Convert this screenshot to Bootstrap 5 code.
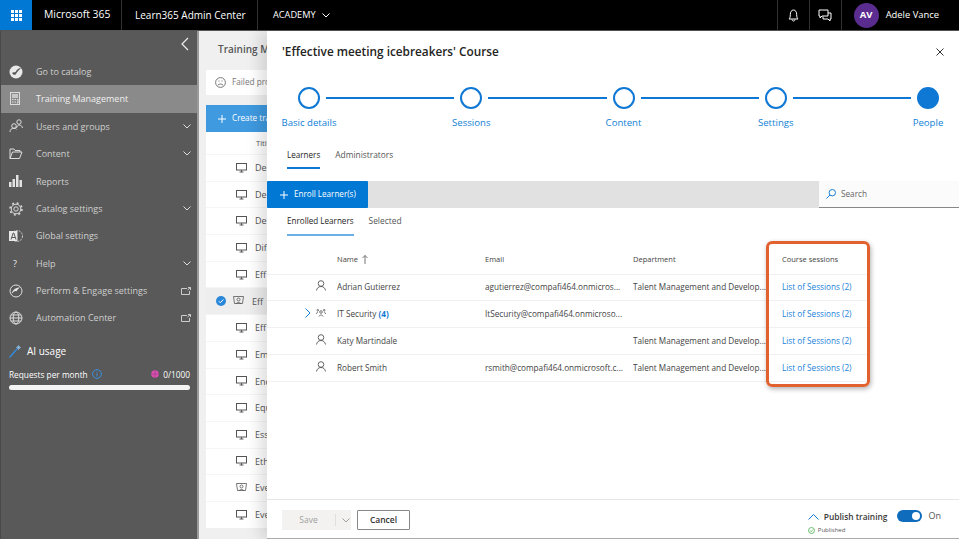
<!DOCTYPE html>
<html lang="en">
<head>
    <meta charset="UTF-8">
    <title>Learn365 Admin Center</title>
    <link href="https://cdn.jsdelivr.net/npm/bootstrap@5.3.0/dist/css/bootstrap.min.css" rel="stylesheet">
    <style>
        html, body { height: 539px; overflow: hidden; }
        body { font-family: "Open Sans", "Noto Sans", sans-serif; font-size: 9px; color: #323130; background: #f0f0f0; }
        svg { display: block; flex-shrink: 0; }

        /* top bar */
        .topbar { height: 31px; background: #000; color: #fff; border-bottom: 1px solid #555; }
        .waffle { width: 32px; background: #0078d4; }
        .top-cell { border-right: 1px solid #333; font-size: 10.4px; white-space: nowrap; }
        .top-brand { width: 90px; padding-left: 12px; }
        .top-app { width: 136px; padding-left: 13px; font-size: 10px; }
        .top-tenant { padding-left: 15px; font-size: 9.2px; gap: 6px; }
        .top-icon { width: 32px; border-left: 1px solid #333; justify-content: center; }
        .avatar { width: 25px; height: 25px; background: #5c2d91; font-size: 9.5px; font-weight: 700; }
        .user-box { border-left: 1px solid #333; padding: 0 20px 0 12px; gap: 7px; font-size: 9.4px; }

        /* sidebar */
        .sidebar { width: 199px; background: #595959; color: #cfcfcf; border-left: 1px solid #4a4a4a; border-right: 2px solid #9a9a9a; }
        .side-collapse { height: 27px; padding: 6px 8px 0 0; }
        .side-item { height: 27.4px; padding-left: 8px; font-size: 9px; }
        .side-item.is-active { background: #8a8a8a; color: #f0f0f0; }
        .side-icon { width: 27px; }
        .side-end { margin-right: 6px; }
        .ai-title { color: #fff; font-size: 10px; margin: 12px 0 0 8px; gap: 5px; line-height: 15px; }
        .ai-row { color: #fff; font-size: 8.3px; padding: 0 7px 0 8px; margin-top: 9px; line-height: 13px; }
        .ai-bar { height: 5px; background: #f4f4f4; border-radius: 3px; margin: 4px 7px 0 8px; }

        /* training list behind the drawer */
        .behind { width: 68px; overflow: hidden; padding-left: 7px; white-space: nowrap; }
        .behind-title { height: 39px; padding: 11px 0 0 12px; font-size: 10px; font-weight: 600; color: #555; }
        .failed-box { height: 25px; background: #fff; width: 100px; padding-left: 9px; gap: 6px; color: #777; font-size: 8.2px; margin-bottom: 10px; }
        .create-btn { height: 27px; width: 100px; background: #3f9ae0; color: #fff; padding-left: 12px; gap: 6px; font-size: 8.2px; }
        .behind-list { background: #fff; width: 100px; }
        .behind-head { height: 22px; padding: 6px 0 0 50px; font-size: 7.6px; color: #555; }
        .behind-row { height: 26.7px; padding-left: 30px; gap: 8px; font-size: 9px; color: #555; border-top: 1px solid #f5f5f5; }
        .behind-row.is-picked { background: #eee; }
        .picked-tick { margin-left: -20px; margin-right: -1px; }

        /* drawer */
        .drawer { background: #fff; z-index: 2; min-width: 0; box-shadow: -7px 0 14px rgba(0,0,0,.13); border-bottom: 1px solid #aaa; }
        .drawer-title { height: 40px; padding: 2px 15px 0; font-size: 11.8px; font-weight: 600; color: #252423; }
        .stepper { height: 63px; padding: 16px 20px 0 31px; }
        .step { width: 22px; color: #0f7fd6; font-size: 9.6px; white-space: nowrap; }
        .step-dot { width: 22px; height: 22px; border: 2px solid #0f78d4; background: #fff; margin-bottom: 7px; flex-shrink: 0; }
        .step-dot.is-current { background: #0f78d4; }
        .step-line { height: 2px; background: #0f78d4; margin: 10px 6px 0; flex: 1 1 0; }
        .step-line.is-long { flex-grow: 1.085; }
        .pane-tabs { padding: 0 20px; gap: 15px; }
        .pane-tabs.is-main .pane-tab { height: 35px; padding-top: 15px; }
        .pane-tabs.is-sub .pane-tab { height: 28px; padding-top: 7px; }
        .pane-tab { font-size: 8.4px; color: #555; border-bottom: 2px solid transparent; white-space: nowrap; }
        .pane-tab.is-on { color: #252423; font-weight: 500; font-size: 8.1px; border-bottom-color: #0f78d4; }
        .pane-tab.is-soft { border-bottom-color: #6cb0e8; }
        .toolbar { height: 27px; background: #e1e1e1; margin-top: 12px; }
        .enroll-btn { width: 101px; background: #0078d4; color: #fff; font-size: 8.1px; gap: 6px; padding: 0 0 0 13px; border: 0; border-radius: 1px; }
        .search-box { width: 140px; background: #fbfbfb; border-bottom: 1px solid #888; padding-left: 7px; gap: 5px; color: #666; font-size: 8.2px; }

        .learner-area { height: 263px; }
        .learner-table { width: 602px; table-layout: fixed; margin: 0; --bs-table-bg: transparent; font-size: 8.2px; color: #444; }
        .learner-table th { height: 38px; font-weight: 400; font-size: 7.5px; color: #444; padding: 10px 0 0; border-bottom: 1px solid #f0f0f0; vertical-align: middle; }
        .learner-table td { height: 26.8px; padding: 0; border-bottom: 1px solid #f0f0f0; vertical-align: middle; white-space: nowrap; overflow: hidden; }
        .col-lead { width: 70px; }
        .col-wide { width: 148px; }
        .lead-cell { gap: 5px; padding: 0 11px 3px 0; }
        .session-link { color: #1a82d8; text-decoration: none; }
        .count-blue { color: #0f78d4; font-weight: 700; }
        .callout { position: absolute; left: 499px; top: 5px; width: 104px; height: 146px; border: 3px solid #e2622f; border-radius: 6px; box-shadow: 1px 2px 5px rgba(0,0,0,.3); pointer-events: none; }

        .drawer-foot { border-top: 1px solid #e6e6e6; padding: 0 18px 0 15px; }
        .save-row { margin-top: 2px; }
        .save-group { width: 69px; height: 20px; background: #f3f2f1; color: #a19f9d; font-size: 8.5px; }
        .save-main { width: 53px; text-align: center; }
        .save-split { border-left: 1px solid #e1dfdd; height: 12px; padding: 0 0 0 6px; }
        .cancel-btn { width: 53px; height: 20px; border: 1px solid #8a8886; background: #fff; color: #323130; font-size: 8.5px; font-weight: 600; padding: 0; border-radius: 1px; margin-left: 6px; }
        .publish-box { padding-top: 8px; margin-right: 10px; }
        .publish-label { font-size: 8.4px; font-weight: 600; color: #3b3a39; gap: 5px; white-space: nowrap; margin-bottom: 2px; }
        .published { font-size: 6px; color: #555; gap: 3px; }
        .toggle-wrap { padding-top: 6px; }
        .toggle-pill { width: 25px; height: 12px; background: #0f6cbd; border-radius: 6px; padding: 2px; }
        .toggle-knob { width: 8px; height: 8px; background: #fff; }
        .toggle-text { font-size: 9px; color: #555; margin-left: 6px; }
    </style>
</head>
<body class="d-flex flex-column">
    <header class="topbar d-flex align-items-stretch flex-shrink-0">
        <div class="waffle d-flex align-items-center justify-content-center">
            <svg width="11" height="11" viewBox="0 0 11 11" fill="#fff"><rect width="3" height="3"/><rect x="4" width="3" height="3"/><rect x="8" width="3" height="3"/><rect y="4" width="3" height="3"/><rect x="4" y="4" width="3" height="3"/><rect x="8" y="4" width="3" height="3"/><rect y="8" width="3" height="3"/><rect x="4" y="8" width="3" height="3"/><rect x="8" y="8" width="3" height="3"/></svg>
        </div>
        <div class="top-cell top-brand d-flex align-items-center">Microsoft 365</div>
        <div class="top-cell top-app d-flex align-items-center">Learn365 Admin Center</div>
        <div class="top-tenant d-flex align-items-center">ACADEMY
            <svg width="8" height="5" viewBox="0 0 8 5" fill="none" stroke="#fff"><path d="M.5.5 4 4 7.5.5"/></svg>
        </div>
        <div class="ms-auto d-flex align-items-stretch">
            <div class="top-icon d-flex align-items-center">
                <svg width="11" height="13" viewBox="0 0 11 13" fill="none" stroke="#fff"><path d="M1 10c1-1 1.300-2 1.300-4.500C2.300 3 3.500 1 5.500 1s3.200 2 3.200 4.500c0 2.500.3 3.500 1.300 4.500zM4 10.500c0 2 3 2 3 0"/></svg>
            </div>
            <div class="top-icon d-flex align-items-center">
                <svg width="14" height="13" viewBox="0 0 14 13" fill="none" stroke="#fff"><path d="M1 1h9v6H4L2 9V7H1zM10 4h3v6h-1v2l-2-2H5V7.500"/></svg>
            </div>
            <div class="user-box d-flex align-items-center">
                <div class="avatar rounded-circle d-flex align-items-center justify-content-center">AV</div>
                <span>Adele Vance</span>
            </div>
        </div>
    </header>

    <div class="d-flex flex-grow-1" style="min-height:0">
        <nav class="sidebar flex-shrink-0 d-flex flex-column">
            <div class="side-collapse d-flex justify-content-end">
                <svg width="8" height="14" viewBox="0 0 8 14" fill="none" stroke="#eee" stroke-width="1.200"><path d="M7 1 1 7l6 6"/></svg>
            </div>
            <div class="side-item d-flex align-items-center">
                <div class="side-icon"><svg width="14" height="14" viewBox="0 0 14 14"><circle cx="7" cy="7" r="6.500" fill="#e8e8e8"/><path d="M3 8c1.500 2 3 2.500 4 1 1-2 3-4 5-6-2.500 0-4.500 2-5.500 4C5.500 7.500 4 7 3 8z" fill="#595959"/></svg></div>
                Go to catalog
            </div>
            <div class="side-item is-active d-flex align-items-center">
                <div class="side-icon"><svg width="13" height="14" viewBox="0 0 13 14" fill="none" stroke="#ddd"><rect x="1.500" y=".5" width="9" height="12"/><path d="M3 3h6M3 5h6" stroke-width="1.500"/><path d="M3 7.500h1.500M5.500 7.500H7M3 10h1.500M5.500 10H7M8 7.500h1V11H8"/></svg></div>
                Training Management
            </div>
            <div class="side-item d-flex align-items-center">
                <div class="side-icon"><svg width="14" height="14" viewBox="0 0 14 14" fill="none" stroke="#ddd"><circle cx="5" cy="7" r="2.300"/><path d="M1 13c0-2.500 1.500-3.700 4-3.700 1 0 2 .3 2.500 1"/><circle cx="10" cy="3" r="2.200"/><path d="M7.500 9c.5-2 1.500-3 2.500-3 2 0 3 1 3.500 3"/></svg></div>
                <span class="flex-grow-1">Users and groups</span>
                <svg class="side-end" width="8" height="5" viewBox="0 0 8 5" fill="none" stroke="#ddd"><path d="M.5.5 4 4 7.500.5"/></svg>
            </div>
            <div class="side-item d-flex align-items-center">
                <div class="side-icon"><svg width="14" height="12" viewBox="0 0 14 12" fill="none" stroke="#ddd"><path d="M1 10.500V1h4l1 1.500h5V4M1 10.500h9.500L13 4H3.500z"/></svg></div>
                <span class="flex-grow-1">Content</span>
                <svg class="side-end" width="8" height="5" viewBox="0 0 8 5" fill="none" stroke="#ddd"><path d="M.5.5 4 4 7.500.5"/></svg>
            </div>
            <div class="side-item d-flex align-items-center">
                <div class="side-icon"><svg width="13" height="12" viewBox="0 0 13 12" fill="#e2e2e2"><rect y="7" width="2.500" height="5"/><rect x="3.500" y="4" width="2.500" height="8"/><rect x="7" y="0" width="2.500" height="12"/><rect x="10.500" y="5" width="2.500" height="7"/></svg></div>
                Reports
            </div>
            <div class="side-item d-flex align-items-center">
                <div class="side-icon"><svg width="14" height="14" viewBox="0 0 14 14" fill="none" stroke="#ddd"><circle cx="7" cy="7" r="2.200"/><circle cx="7" cy="7" r="4.800"/><circle cx="7" cy="7" r="6" stroke-width="1.500" stroke-dasharray="2 2.710"/></svg></div>
                <span class="flex-grow-1">Catalog settings</span>
                <svg class="side-end" width="8" height="5" viewBox="0 0 8 5" fill="none" stroke="#ddd"><path d="M.5.5 4 4 7.500.5"/></svg>
            </div>
            <div class="side-item d-flex align-items-center">
                <div class="side-icon"><svg width="14" height="14" viewBox="0 0 14 14"><circle cx="8" cy="7" r="5.500" fill="none" stroke="#ccc" stroke-dasharray="2 1"/><rect x="0" y="2" width="8.500" height="10" fill="#e8e8e8"/><path d="M2 10.500 4.200 4h.6l2.200 6.500M3 8.500h3" fill="none" stroke="#595959"/></svg></div>
                Global settings
            </div>
            <div class="side-item d-flex align-items-center">
                <div class="side-icon ps-1" style="color:#eee;font-size:9px">?</div>
                <span class="flex-grow-1">Help</span>
                <svg class="side-end" width="8" height="5" viewBox="0 0 8 5" fill="none" stroke="#ddd"><path d="M.5.5 4 4 7.500.5"/></svg>
            </div>
            <div class="side-item d-flex align-items-center">
                <div class="side-icon"><svg width="14" height="14" viewBox="0 0 14 14"><circle cx="7" cy="7" r="6" fill="none" stroke="#ddd"/><path d="M2.500 10C3.500 6 6.500 3.500 11 3.500 9 5 8 6 7.500 7.500 6.500 6.500 4.500 7.500 2.500 10z" fill="#e8e8e8"/></svg></div>
                <span class="flex-grow-1">Perform &amp; Engage settings</span>
                <svg class="side-end" width="10" height="8" viewBox="0 0 10 8" fill="none" stroke="#ccc"><path d="M6 1.500H.5v6h8V4M7 .5h2.500V3M9.500.5 6.500 3"/></svg>
            </div>
            <div class="side-item d-flex align-items-center">
                <div class="side-icon"><svg width="14" height="14" viewBox="0 0 14 14" fill="none" stroke="#ddd"><circle cx="7" cy="7" r="6"/><ellipse cx="7" cy="7" rx="2.800" ry="6"/><path d="M1 7h12M2 4h10M2 10h10"/></svg></div>
                <span class="flex-grow-1">Automation Center</span>
                <svg class="side-end" width="10" height="8" viewBox="0 0 10 8" fill="none" stroke="#ccc"><path d="M6 1.500H.5v6h8V4M7 .5h2.500V3M9.500.5 6.500 3"/></svg>
            </div>
            <div class="ai-title d-flex align-items-center">
                <svg width="13" height="14" viewBox="0 0 13 14" fill="none"><path d="M.5 13.500 8 5" stroke="#2f8fe6" stroke-width="1.200"/><path d="M9.500 1v5M7 3.500h5M8 2l3 3M11 2 8 5" stroke="#8cc2f0" stroke-width=".7"/></svg>
                <span>AI usage</span>
            </div>
            <div class="ai-row d-flex align-items-center">
                <span>Requests per month</span>
                <svg class="ms-1" width="10" height="10" viewBox="0 0 10 10" fill="none" stroke="#3b8fe0"><circle cx="5" cy="5" r="4.400"/><path d="M5 4.200V7.500M5 2.500v1"/></svg>
                <svg class="ms-auto me-1" width="8" height="8" viewBox="0 0 8 8"><circle cx="4" cy="4" r="3.800" fill="#d94fb0"/><path d="M0 4h8M4 0v8" stroke="#8d3a78" stroke-width=".5"/></svg>
                <span>0/1000</span>
            </div>
            <div class="ai-bar"></div>
        </nav>

        <section class="behind flex-shrink-0">
            <div class="behind-title">Training M</div>
            <div class="failed-box d-flex align-items-center">
                <svg width="11" height="11" viewBox="0 0 11 11" fill="none" stroke="#777"><circle cx="5.500" cy="5.500" r="4.900"/><path d="M3 8c1.500-1.300 3.500-1.300 5 0M3.500 4h1M6.500 4h1"/></svg>
                Failed pro
            </div>
            <div class="create-btn d-flex align-items-center">
                <svg width="8" height="8" viewBox="0 0 8 8" stroke="#fff"><path d="M4 0v8M0 4h8"/></svg>
                Create tra
            </div>
            <div class="behind-list" id="behindList">
                <div class="behind-head">Titl</div>
            </div>
        </section>

        <main class="drawer flex-grow-1 d-flex flex-column position-relative">
            <div class="drawer-title d-flex align-items-center justify-content-between flex-shrink-0">
                <span>'Effective meeting icebreakers' Course</span>
                <svg width="8" height="8" viewBox="0 0 8 8" fill="none" stroke="#333"><path d="M.5.5l7 7M7.500.5l-7 7"/></svg>
            </div>
            <div class="stepper d-flex flex-shrink-0">
                <div class="step d-flex flex-column align-items-center"><div class="step-dot rounded-circle"></div>Basic details</div>
                <div class="step-line is-long"></div>
                <div class="step d-flex flex-column align-items-center"><div class="step-dot rounded-circle"></div>Sessions</div>
                <div class="step-line"></div>
                <div class="step d-flex flex-column align-items-center"><div class="step-dot rounded-circle"></div>Content</div>
                <div class="step-line"></div>
                <div class="step d-flex flex-column align-items-center"><div class="step-dot rounded-circle"></div>Settings</div>
                <div class="step-line"></div>
                <div class="step d-flex flex-column align-items-center"><div class="step-dot rounded-circle is-current"></div>People</div>
            </div>
            <div class="pane-tabs is-main d-flex flex-shrink-0">
                <div class="pane-tab is-on">Learners</div>
                <div class="pane-tab">Administrators</div>
            </div>
            <div class="toolbar d-flex justify-content-between flex-shrink-0">
                <button class="enroll-btn d-flex align-items-center" type="button">
                    <svg width="8" height="8" viewBox="0 0 8 8" stroke="#fff"><path d="M4 0v8M0 4h8"/></svg>
                    Enroll Learner(s)
                </button>
                <div class="search-box d-flex align-items-center">
                    <svg width="10" height="10" viewBox="0 0 10 10" fill="none" stroke="#1a82d8"><circle cx="6.300" cy="3.700" r="3.200"/><path d="M4 6 .5 9.500"/></svg>
                    Search
                </div>
            </div>
            <div class="pane-tabs is-sub d-flex flex-shrink-0">
                <div class="pane-tab is-on is-soft">Enrolled Learners</div>
                <div class="pane-tab">Selected</div>
            </div>
            <div class="learner-area position-relative flex-shrink-0">
                <table class="table learner-table">
                    <thead>
                        <tr>
                            <th class="col-lead"></th>
                            <th class="col-wide"><span class="d-inline-flex align-items-center gap-1">Name <svg width="6" height="9" viewBox="0 0 6 9" fill="none" stroke="#555" stroke-width=".8"><path d="M3 9V.5M.5 3 3 .5 5.500 3"/></svg></span></th>
                            <th class="col-wide">Email</th>
                            <th style="width:149px">Department</th>
                            <th>Course sessions</th>
                        </tr>
                    </thead>
                    <tbody>
                        <tr>
                            <td><div class="lead-cell d-flex justify-content-end"><svg width="10" height="11" viewBox="0 0 10 11" fill="none" stroke="#555" stroke-width=".9"><circle cx="5" cy="3.500" r="2.800"/><path d="M.5 10.500C1 8 2.500 6.500 5 6.500s4 1.500 4.500 4"/></svg></div></td>
                            <td>Adrian Gutierrez</td>
                            <td>agutierrez@compafi464.onmicros...</td>
                            <td>Talent Management and Develop...</td>
                            <td><a class="session-link" href="#">List of Sessions (2)</a></td>
                        </tr>
                        <tr>
                            <td><div class="lead-cell d-flex justify-content-end align-items-center"><svg width="6" height="10" viewBox="0 0 6 10" fill="none" stroke="#1a82d8"><path d="M.5.5 5 5 .5 9.500"/></svg><svg width="10" height="8" viewBox="0 0 10 8" fill="none" stroke="#555" stroke-width=".8"><circle cx="5" cy="3" r="1.300"/><path d="M3 7.500c.3-2 3.700-2 4 0M.5 5C.7 3.500 1.500 3 2 3M9.500 5C9.300 3.500 8.500 3 8 3"/><circle cx="1.800" cy="1.200" r=".8"/><circle cx="8.200" cy="1.200" r=".8"/></svg></div></td>
                            <td>IT Security <span class="count-blue">(4)</span></td>
                            <td>ItSecurity@compafi464.onmicroso...</td>
                            <td></td>
                            <td><a class="session-link" href="#">List of Sessions (2)</a></td>
                        </tr>
                        <tr>
                            <td><div class="lead-cell d-flex justify-content-end"><svg width="10" height="11" viewBox="0 0 10 11" fill="none" stroke="#555" stroke-width=".9"><circle cx="5" cy="3.500" r="2.800"/><path d="M.5 10.500C1 8 2.500 6.500 5 6.500s4 1.500 4.500 4"/></svg></div></td>
                            <td>Katy Martindale</td>
                            <td></td>
                            <td>Talent Management and Develop...</td>
                            <td><a class="session-link" href="#">List of Sessions (2)</a></td>
                        </tr>
                        <tr>
                            <td><div class="lead-cell d-flex justify-content-end"><svg width="10" height="11" viewBox="0 0 10 11" fill="none" stroke="#555" stroke-width=".9"><circle cx="5" cy="3.500" r="2.800"/><path d="M.5 10.500C1 8 2.500 6.500 5 6.500s4 1.500 4.500 4"/></svg></div></td>
                            <td>Robert Smith</td>
                            <td>rsmith@compafi464.onmicrosoft.c...</td>
                            <td>Talent Management and Develop...</td>
                            <td><a class="session-link" href="#">List of Sessions (2)</a></td>
                        </tr>
                    </tbody>
                </table>
                <div class="callout"></div>
            </div>
            <footer class="drawer-foot flex-grow-1 d-flex align-items-center justify-content-between">
                <div class="save-row d-flex align-items-center">
                    <div class="save-group d-flex align-items-center">
                        <span class="save-main">Save</span>
                        <span class="save-split d-flex align-items-center"><svg width="8" height="5" viewBox="0 0 8 5" fill="none" stroke="#a19f9d"><path d="M.5.5 4 4 7.500.5"/></svg></span>
                    </div>
                    <button class="cancel-btn" type="button">Cancel</button>
                </div>
                <div class="d-flex align-items-start">
                    <div class="publish-box">
                        <div class="publish-label d-flex align-items-center">
                            <svg width="11" height="6" viewBox="0 0 11 6" fill="none" stroke="#0f78d4"><path d="M.5 5.500l5-5 5 5"/></svg>
                            Publish training
                        </div>
                        <div class="published d-flex align-items-center">
                            <svg width="7" height="7" viewBox="0 0 7 7" fill="none" stroke="#4caf50" stroke-width=".8"><circle cx="3.500" cy="3.500" r="3"/><path d="M2 3.500 3.200 4.700 5 2.500"/></svg>
                            Published
                        </div>
                    </div>
                    <div class="toggle-wrap d-flex align-items-center">
                        <div class="toggle-pill d-flex justify-content-end"><div class="toggle-knob rounded-circle"></div></div>
                        <span class="toggle-text">On</span>
                    </div>
                </div>
            </footer>
        </main>
    </div>

    <script>
        // rows of the list that sits behind the drawer, only the part that shows
        const rows = ["De","De","De","Dif","Eff","Eff","Eff","Em","Ene","Equ","Ess","Eth","Eve","Eve"];
        const screen = '<svg width="11" height="10" viewBox="0 0 11 10" fill="none" stroke="#555"><rect x=".5" y=".5" width="10" height="6.500"/><path d="M3.500 9h4M5.500 7v2"/></svg>';
        const room = '<svg width="11" height="10" viewBox="0 0 11 10" fill="none" stroke="#555" stroke-width=".8"><path d="M.5.5h10l-1 7h-8z"/><circle cx="5.500" cy="3.500" r="1.500"/><path d="M3 8c.5-2 4.500-2 5 0"/></svg>';
        const tick = '<svg class="picked-tick" width="10" height="10" viewBox="0 0 10 10"><circle cx="5" cy="5" r="5" fill="#2b88d8"/><path d="M2.800 5.200 4.300 6.700 7.300 3.500" fill="none" stroke="#fff"/></svg>';
        const list = document.getElementById("behindList");
        rows.forEach(function (name, i) {
            const row = document.createElement("div");
            row.className = "behind-row d-flex align-items-center" + (i === 5 ? " is-picked" : "");
            const icon = (i === 5 || i === 12) ? room : screen;
            row.innerHTML = (i === 5 ? tick : "") + icon + "<span>" + name + "</span>";
            list.appendChild(row);
        });
    </script>
    <script src="https://cdn.jsdelivr.net/npm/bootstrap@5.3.0/dist/js/bootstrap.bundle.min.js"></script>
</body>
</html>
